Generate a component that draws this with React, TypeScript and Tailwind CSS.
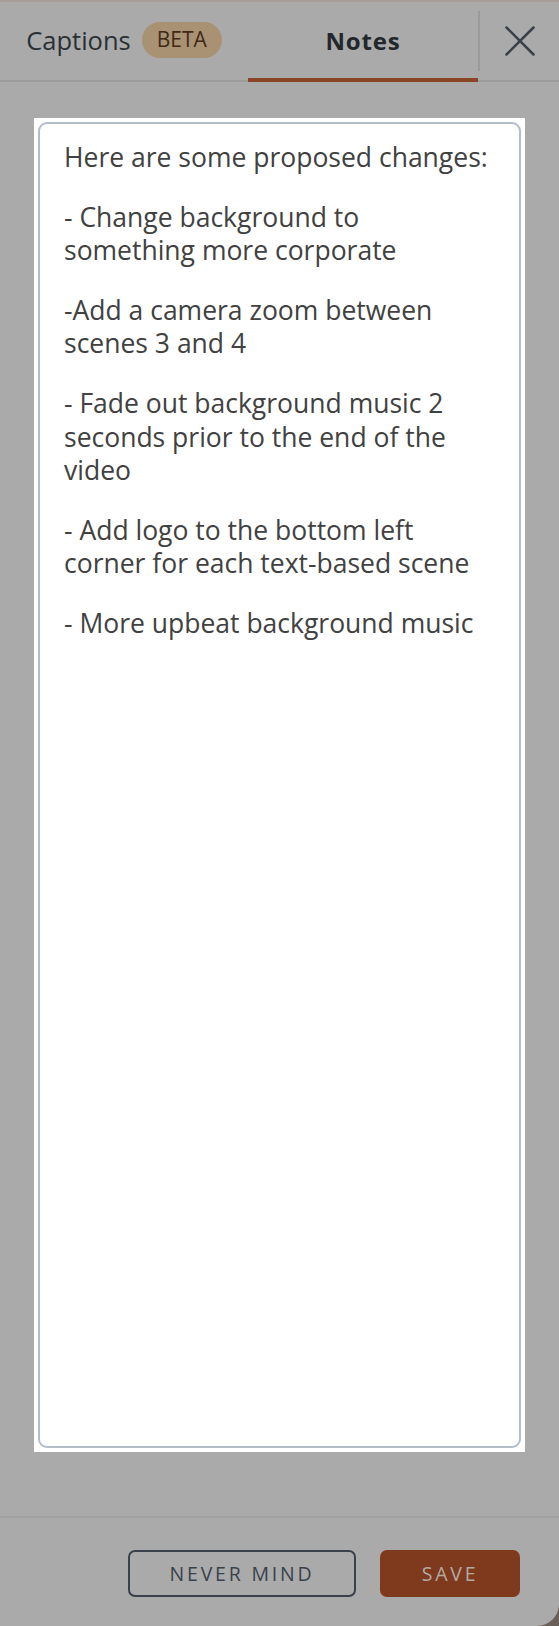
import { X } from 'lucide-react'

// 改行位置は元画面に合わせて固定
const NOTES: string[][] = [
    ['Here are some proposed changes:'],
    ['- Change background to', 'something more corporate'],
    ['-Add a camera zoom between', 'scenes 3 and 4'],
    ['- Fade out background music 2', 'seconds prior to the end of the', 'video'],
    ['- Add logo to the bottom left', 'corner for each text-based scene'],
    ['- More upbeat background music'],
]

// ノートパネル(モーダル下で暗転した状態)
export default function App() {
    return (
        <div className="bg-[#6a605a] h-[1626px] w-[559px] overflow-hidden font-['Open_Sans','Lato',sans-serif]">
            <div className="h-[2px] bg-[#a89f98]" />
            <div className="flex h-[1624px] flex-col rounded-br-[22px] bg-[#aaaaaa]">
                {/* --- タブ --- */}
                <div className="flex h-[80px] items-stretch border-b-2 border-[#9c9c9c]">
                    <div className="flex w-[248px] items-center justify-center gap-[11px] pb-[2px]">
                        <span className="text-[25.5px] text-[#2b3034]">Captions</span>
                        <span className="flex h-[36px] items-center rounded-full bg-[#a99274] px-[15px] text-[21px] text-[#3f2a14]">
                            BETA
                        </span>
                    </div>
                    <div className="flex w-[230px] items-center justify-center border-b-4 border-[#8a4426] -mb-[2px] pt-[2px]">
                        <span className="text-[24px] font-bold tracking-[0.8px] text-[#22272b]">Notes</span>
                    </div>
                    <div className="my-[9px] w-[2px] bg-[#9a9a9a]" />
                    <button className="flex flex-1 items-center justify-center text-[#3a4148]">
                        <X size={54} strokeWidth={1.15} />
                    </button>
                </div>

                {/* --- ノート本文 --- */}
                <div className="flex-1 px-[34px] pt-[36px] pb-[64px]">
                    <div className="h-full bg-white p-[4px]">
                        <div className="h-full rounded-[9px] border-2 border-[#b4bcc8] px-[24px] pt-[17px] text-[26.5px] leading-[33.6px] text-[#414141]">
                            {NOTES.map((lines) => (
                                <p key={lines[0]} className="mb-[26px] whitespace-nowrap">
                                    {lines.map((l, i) => (
                                        <span key={i} className="block">{l}</span>
                                    ))}
                                </p>
                            ))}
                        </div>
                    </div>
                </div>

                {/* --- フッター --- */}
                <div className="flex h-[110px] items-start justify-end gap-[24px] border-t-2 border-[#a0a0a0] pt-[32px] pr-[39px]">
                    <button className="h-[47px] w-[228px] rounded-[7px] border-2 border-[#39424b] text-[19.5px] tracking-[2.8px] text-[#39424b]">
                        NEVER MIND
                    </button>
                    <button className="h-[47px] w-[140px] rounded-[7px] bg-[#7f391c] text-[19.5px] tracking-[2.8px] text-[#b3aaa5]">
                        SAVE
                    </button>
                </div>
            </div>
        </div>
    )
}
